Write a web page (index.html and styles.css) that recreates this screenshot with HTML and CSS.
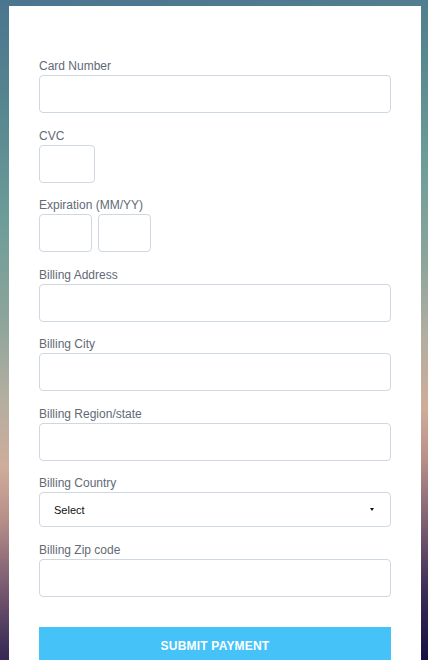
FILE: index.html
```html
<!DOCTYPE html>
<html lang="en">
<head>
<meta charset="utf-8">
<title>Payment</title>
<link rel="stylesheet" href="styles.css">
</head>
<body>
<div class="card">
  <form class="form">
    <div class="group">
      <label class="label">Card Number</label>
      <input class="input" type="text">
    </div>
    <div class="group">
      <label class="label">CVC</label>
      <input class="input input-cvc" type="text">
    </div>
    <div class="group">
      <label class="label">Expiration (MM/YY)</label>
      <div class="row">
        <input class="input input-exp" type="text">
        <input class="input input-exp" type="text">
      </div>
    </div>
    <div class="group">
      <label class="label">Billing Address</label>
      <input class="input" type="text">
    </div>
    <div class="group">
      <label class="label">Billing City</label>
      <input class="input" type="text">
    </div>
    <div class="group">
      <label class="label">Billing Region/state</label>
      <input class="input" type="text">
    </div>
    <div class="group group-select">
      <label class="label">Billing Country</label>
      <div class="select-wrap">
        <select class="select">
          <option>Select</option>
        </select>
      </div>
    </div>
    <div class="group">
      <label class="label">Billing Zip code</label>
      <input class="input" type="text">
    </div>
    <button class="submit" type="button">SUBMIT PAYMENT</button>
  </form>
</div>
</body>
</html>
```
FILE: styles.css
```css
html, body {
  margin: 0;
  padding: 0;
  height: 100%;
  overflow: hidden;
}
body {
  font-family: "Liberation Sans", Arial, Helvetica, sans-serif;
  background: linear-gradient(172deg,
    #4a7590 0%,
    #56868f 15%,
    #6b9c98 30%,
    #8ea59b 45%,
    #b2aea0 55%,
    #cfac9a 65%,
    #b8908a 72%,
    #7d5e72 81%,
    #3e2e58 90%,
    #160e42 100%);
  background-attachment: fixed;
}
.card {
  margin: 6px 0 0 9px;
  width: 412px;
  height: 700px;
  background: #fff;
  box-sizing: border-box;
  padding: 53px 30px 0 30px;
}
.form {
  display: flex;
  flex-direction: column;
}
.group {
  display: flex;
  flex-direction: column;
  margin-bottom: 15.5px;
}
.group-select {
  margin-bottom: 16px;
}
.label {
  font-size: 12px;
  line-height: 14px;
  color: #626a76;
  margin-bottom: 2px;
}
.input {
  box-sizing: border-box;
  height: 38px;
  width: 100%;
  border: 1px solid #cfd8e1;
  border-radius: 4px;
  background: #fff;
  margin: 0;
  padding: 0 10px;
  font: inherit;
  outline: none;
}
.input-cvc {
  width: 56px;
}
.row {
  display: flex;
  gap: 6px;
}
.input-exp {
  width: 53px;
}
.select-wrap {
  position: relative;
}
.select-wrap::after {
  content: "";
  position: absolute;
  right: 17px;
  top: 16px;
  border-left: 2.5px solid transparent;
  border-right: 2.5px solid transparent;
  border-top: 3px solid #111;
  pointer-events: none;
}
.select {
  -webkit-appearance: none;
  appearance: none;
  box-sizing: border-box;
  width: 100%;
  height: 35px;
  border: 1px solid #cfd8e1;
  border-radius: 4px;
  background: #fff;
  padding: 0 14px;
  font-family: "Liberation Sans", Arial, sans-serif;
  font-size: 11px;
  color: #111;
  outline: none;
  margin: 0;
}
.submit {
  margin-top: 14.5px;
  height: 40px;
  border: none;
  background: #45c3f9;
  color: #fff;
  font-family: "Liberation Sans", Arial, sans-serif;
  font-weight: bold;
  font-size: 12px;
  letter-spacing: 0.2px;
  padding: 0 0 2px 0;
  width: 100%;
  cursor: pointer;
}
```
